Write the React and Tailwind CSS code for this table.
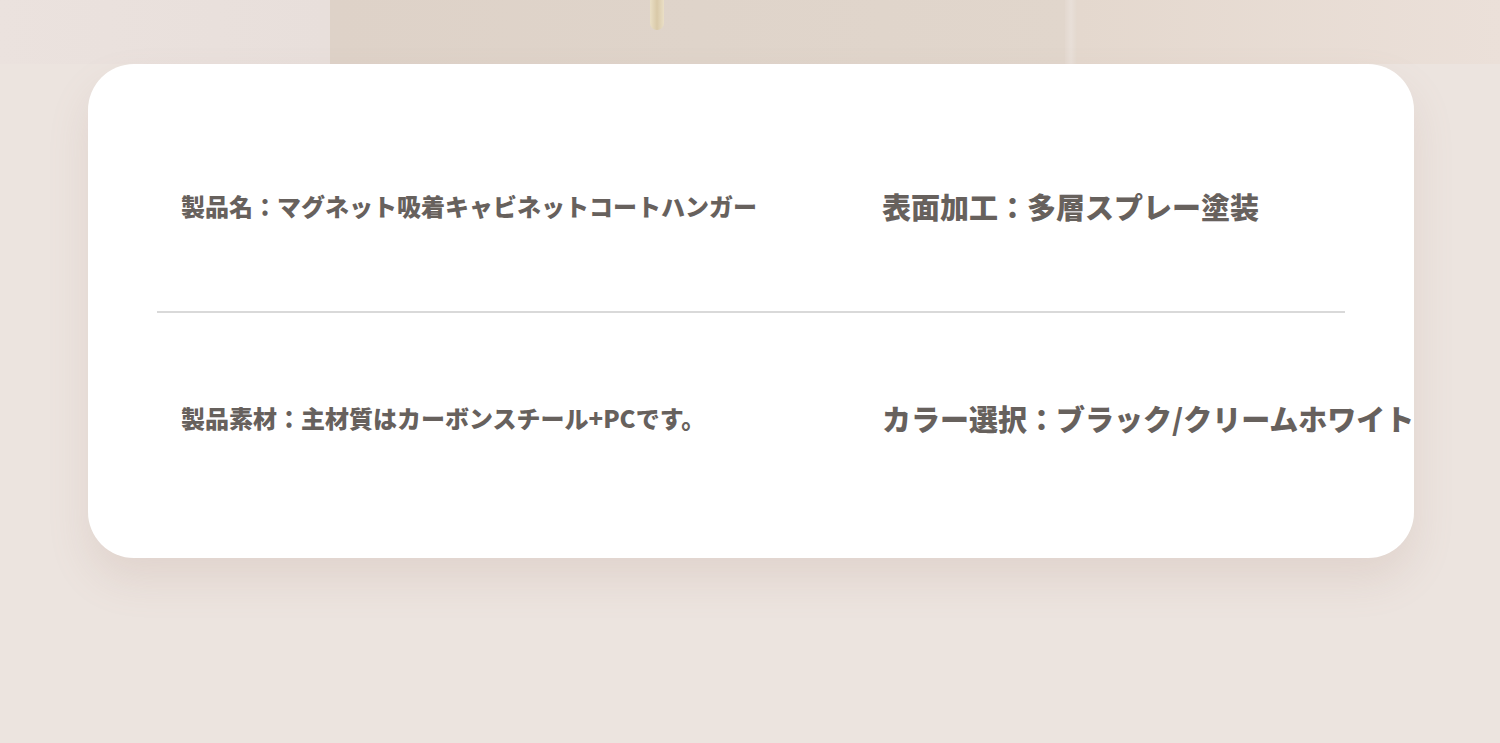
export default function App() {
  const font = { fontFamily: '"Noto Sans CJK JP", "Noto Sans", sans-serif' };
  return (
    <div className="w-full h-[743px] bg-[#ece4df] flex flex-col overflow-hidden" style={font}>
      <div className="flex h-[64px] shrink-0">
        <div className="w-[330px] bg-gradient-to-r from-[#ebe2de] to-[#e8dfdb]" />
        <div className="w-[735px] bg-gradient-to-r from-[#ded2c8] via-[#dfd4ca] to-[#e1d6cc] flex">
          <div className="ml-[320px] w-[14px] h-[30px] rounded-b-full bg-gradient-to-r from-[#eadfc6] via-[#d9c9a8] to-[#eadfc6]" />
        </div>
        <div className="w-[12px] bg-gradient-to-r from-[#e3d8cf] via-[#e8dfd8] to-[#e3d8ce]" />
        <div className="flex-1 bg-gradient-to-r from-[#e4d8ce] to-[#ebe0d9]" />
      </div>
      <div className="ml-[88px] w-[1326px] h-[494px] shrink-0 rounded-[46px] bg-white shadow-[0_22px_40px_rgba(170,130,120,0.16)] px-[69px] flex flex-col text-[#67615d] font-extrabold">
        <div className="h-[247px] pt-[37px] flex items-center">
          <div className="w-[725px] shrink-0 pl-[24px] text-[24px] leading-none whitespace-nowrap">製品名：マグネット吸着キャビネットコートハンガー</div>
          <div className="text-[29px] leading-none whitespace-nowrap">表面加工：多層スプレー塗装</div>
        </div>
        <div className="h-[2px] bg-[#d9d9d9]" />
        <div className="h-[245px] pb-[35px] flex items-center">
          <div className="w-[725px] shrink-0 pl-[24px] text-[24px] leading-none whitespace-nowrap">製品素材：主材質はカーボンスチール+PCです。</div>
          <div className="text-[29px] leading-none whitespace-nowrap">カラー選択：ブラック/クリームホワイト</div>
        </div>
      </div>
    </div>
  );
}
